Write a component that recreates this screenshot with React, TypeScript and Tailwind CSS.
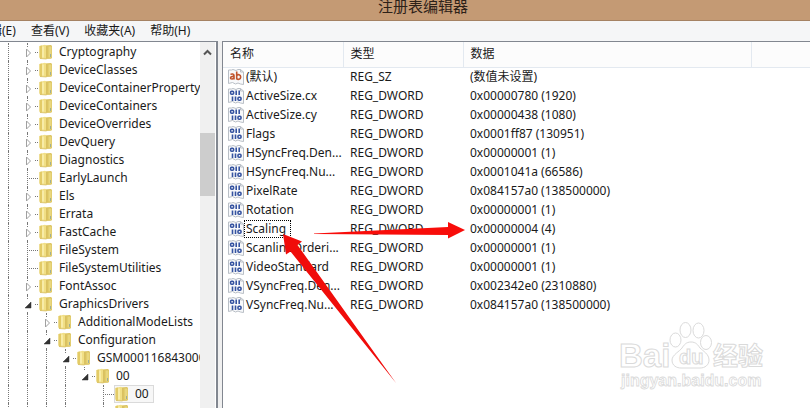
import { clsx } from 'clsx';

type TreeNode = {
  name: string;
  level: number;
  state: 'open' | 'closed' | 'leaf';
  last?: boolean;
  selected?: boolean;
};

const TREE: TreeNode[] = [
  { name: 'Cryptography', level: 1, state: 'closed' },
  { name: 'DeviceClasses', level: 1, state: 'closed' },
  { name: 'DeviceContainerPropertyUpdateEvents', level: 1, state: 'closed' },
  { name: 'DeviceContainers', level: 1, state: 'closed' },
  { name: 'DeviceOverrides', level: 1, state: 'closed' },
  { name: 'DevQuery', level: 1, state: 'closed' },
  { name: 'Diagnostics', level: 1, state: 'closed' },
  { name: 'EarlyLaunch', level: 1, state: 'leaf' },
  { name: 'Els', level: 1, state: 'closed' },
  { name: 'Errata', level: 1, state: 'closed' },
  { name: 'FastCache', level: 1, state: 'closed' },
  { name: 'FileSystem', level: 1, state: 'leaf' },
  { name: 'FileSystemUtilities', level: 1, state: 'leaf' },
  { name: 'FontAssoc', level: 1, state: 'closed' },
  { name: 'GraphicsDrivers', level: 1, state: 'open' },
  { name: 'AdditionalModeLists', level: 2, state: 'closed' },
  { name: 'Configuration', level: 2, state: 'open' },
  { name: 'GSM000116843000', level: 3, state: 'open' },
  { name: '00', level: 4, state: 'open', last: true },
  { name: '00', level: 5, state: 'leaf', selected: true },
  { name: '', level: 5, state: 'leaf' },
];

// the only key at this depth is the last one, so no guide runs on below it
const LAST_LEVEL = 4;

const VALUES = [
  { name: '(默认)', type: 'REG_SZ', data: '(数值未设置)' },
  { name: 'ActiveSize.cx', type: 'REG_DWORD', data: '0x00000780 (1920)' },
  { name: 'ActiveSize.cy', type: 'REG_DWORD', data: '0x00000438 (1080)' },
  { name: 'Flags', type: 'REG_DWORD', data: '0x0001ff87 (130951)' },
  { name: 'HSyncFreq.Den...', type: 'REG_DWORD', data: '0x00000001 (1)' },
  { name: 'HSyncFreq.Nu...', type: 'REG_DWORD', data: '0x0001041a (66586)' },
  { name: 'PixelRate', type: 'REG_DWORD', data: '0x084157a0 (138500000)' },
  { name: 'Rotation', type: 'REG_DWORD', data: '0x00000001 (1)' },
  { name: 'Scaling', type: 'REG_DWORD', data: '0x00000004 (4)', focused: true },
  { name: 'ScanlineOrderi...', type: 'REG_DWORD', data: '0x00000001 (1)' },
  { name: 'VideoStandard', type: 'REG_DWORD', data: '0x00000001 (1)' },
  { name: 'VSyncFreq.Den...', type: 'REG_DWORD', data: '0x002342e0 (2310880)' },
  { name: 'VSyncFreq.Nu...', type: 'REG_DWORD', data: '0x084157a0 (138500000)' },
];

const MENU = ['编辑(E)', '查看(V)', '收藏夹(A)', '帮助(H)'];

function FolderIcon() {
  return (
    <svg width="14" height="16" viewBox="0 0 14 16" className="shrink-0">
      <path d="M5.5 1.5 12 1l1 1v12l-1 .8-6.5.2z" fill="#dcc460" />
      <path d="M9.500 2.500H12.500V13.500H9.500z" fill="#e9d77e" />
      <path d="M.5 2 6 .8 7.500 2v13L1 14.500.5 13z" fill="#f1df85" />
      <path d="M.5 2 3 1.500v13L1 14.500.5 13z" fill="#e3cb67" />
      <path d="M4 2.500v11" stroke="#faf0b4" strokeWidth="1.500" />
      <path d="M7.500 2v12.500M1 14.500 7.500 15" stroke="#d3b95a" strokeWidth=".7" />
      <path d="M11.500 10v3" stroke="#8aa3a0" strokeWidth=".8" />
    </svg>
  );
}

function ValueIcon({ text }: { text: boolean }) {
  return (
    <svg width="16" height="16" viewBox="0 0 16 16" className="shrink-0">
      <path d="M.5 1h3l1.500-.5 3 1 2-1 2.500 0 3 2.500v12.500l-3-.5-2.500-1-2.500 1-3-1.500-4 1z" fill="#f8f9fb" stroke="#b9bfc6" />
      <path d="M12.500.5v2.500h3" fill="none" stroke="#b9bfc6" />
      {text ? (
        <g fill="none" stroke="#c0532c" strokeWidth="1.600">
          <path d="M2.500 5.500c1-.8 3.500-.8 3.500 1V10.500M6 7.500c-2-.3-3.500.2-3.500 1.500S5 10.500 6 9" />
          <path d="M8.700 2.500v8M8.700 6.500c1-1.500 4-1.200 4 1.500s-3 3-4 1.500" />
        </g>
      ) : (
        <g fill="none" stroke="#3553a0" strokeWidth="1.600">
          <rect x="2.600" y="3.300" width="3" height="3" rx="1" />
          <path d="M8.200 2.500V7M11.200 2.500V7" />
          <path d="M4.500 8.500V13M7.500 8.500V13" />
          <rect x="10" y="9.300" width="3" height="3" rx="1" />
        </g>
      )}
    </svg>
  );
}

function TreeRow({ node }: { node: TreeNode }) {
  return (
    <li className="flex h-[18px] items-center pl-2">
      {Array.from({ length: node.level }, (_, i) => (
        <span
          key={i}
          className={clsx('w-[19px] shrink-0 self-stretch border-l border-dotted', i === LAST_LEVEL ? 'border-transparent' : 'border-[#777]')}
        />
      ))}
      <span className="relative flex w-[11px] shrink-0 items-center self-stretch">
        <span className={clsx('absolute left-0 top-0 border-l border-dotted border-[#777]', node.last ? 'h-1/2' : 'h-full')} />
        <span className="w-full border-t border-dotted border-[#777]" />
        {node.state !== 'leaf' && (
          <button aria-label={node.name} className="absolute -left-1 top-1 h-3 w-3 bg-white">
            <svg width="12" height="12" viewBox="0 0 12 12">
              {node.state === 'closed' ? (
                <path d="M3.500 2v8L7.500 6z" fill="#fff" stroke="#a0a0a0" />
              ) : (
                <path d="M8 3v6H2z" fill="#333" stroke="#333" strokeWidth=".5" />
              )}
            </svg>
          </button>
        )}
      </span>
      <span
        className={clsx(
          'flex h-[18px] shrink-0 items-center gap-1.5 whitespace-nowrap border pr-1',
          node.selected ? 'border-[#dadada] bg-[#f7f7f7]' : 'border-transparent',
        )}
      >
        <FolderIcon />
        {node.name}
      </span>
    </li>
  );
}

function Arrows() {
  return (
    <svg width="200" height="180" viewBox="280 210 200 180" className="pointer-events-none absolute left-[57px] top-[168px]">
      <path d="M314 233.500 448 227v-5l17 8-17 8.500v-3.500l-134-1z" fill="#f80d0a" />
      <path d="M283 234l19 7.500-4.500 3.500L396 383 290.500 251.500l-4.500 3z" fill="#f00c0a" />
    </svg>
  );
}

function Watermark() {
  return (
    <svg width="160" height="84" viewBox="610 315 160 84" className="pointer-events-none absolute right-10 bottom-2">
      <g fill="#fff" stroke="#dadada" strokeWidth="1" fontFamily="'Liberation Sans', 'Noto Sans CJK SC', sans-serif" fontWeight="700">
        <text x="619" y="366" fontSize="33">Bai</text>
        <ellipse cx="675.500" cy="339" rx="5.500" ry="7" />
        <ellipse cx="685.500" cy="329" rx="5.500" ry="7.500" />
        <ellipse cx="698.500" cy="329.500" rx="5.500" ry="7.500" />
        <ellipse cx="706" cy="341.500" rx="5.500" ry="7" />
        <path d="M691 341c-5 0-7 3-9 6s-10 7-10 12c0 6 5 8 9 8h19c5 0 9-3 9-8 0-6-6-9-9-12-2-3-4-6-9-6z" />
        <text x="679" y="363" fontSize="20">du</text>
        <text x="713" y="364" fontSize="25">经验</text>
        <text x="621" y="385" fontSize="16" strokeWidth=".8">jingyan.baidu.com</text>
      </g>
    </svg>
  );
}

export default function App() {
  return (
    <div className="flex h-screen flex-col overflow-hidden bg-[#f0f0f0] font-['Noto_Sans','Noto_Sans_CJK_SC',sans-serif] text-xs text-[#1a1a1a]">
      <header className="flex h-[21px] shrink-0 items-end justify-center border-b border-[#a58263] bg-[#c49a74]">
        <h1 className="pb-1 pl-9 text-[15px] leading-5 text-[#2d2118]">注册表编辑器</h1>
      </header>
      <nav className="-ml-[22px] flex h-5 shrink-0 items-center gap-[15px] bg-[#f5f6f7]">
        {MENU.map((item) => (
          <button key={item} className="whitespace-nowrap">{item}</button>
        ))}
      </nav>
      <div className="flex min-h-0 flex-1 gap-1">
        <aside className="flex w-[218px] shrink-0 overflow-hidden border-t border-r-2 border-[#828790] bg-white pr-px">
          <ul className="min-w-0 flex-1 overflow-hidden pt-px">
            {TREE.map((node, i) => (
              <TreeRow key={i} node={node} />
            ))}
          </ul>
          <div className="flex w-[15px] shrink-0 flex-col bg-[#f0f0f0]">
            <button aria-label="Scroll up" className="flex h-5 items-center justify-center">
              <svg width="9" height="7" viewBox="0 0 9 7">
                <path d="M1 5.500 4.500 2 8 5.500" fill="none" stroke="#555" strokeWidth="2" />
              </svg>
            </button>
            <span className="flex-[71]" />
            <span className="h-[63px] bg-[#cdcdcd]" />
            <span className="flex-[212]" />
          </div>
        </aside>
        <main className="relative min-w-0 flex-1 overflow-hidden border-t border-l border-[#828790] bg-white">
          <table className="w-full table-fixed border-collapse text-left">
            <colgroup>
              <col className="w-[120px]" />
              <col className="w-[120px]" />
              <col className="w-[288px]" />
              <col />
            </colgroup>
            <thead>
              <tr className="h-[25px] border-b border-[#e3e9f0] bg-[#fcfcfc]">
                <th className="border-r border-[#e3e9f0] pl-[7px] font-normal">名称</th>
                <th className="border-r border-[#e3e9f0] pl-[7px] font-normal">类型</th>
                <th className="border-r border-[#e3e9f0] pl-[7px] font-normal">数据</th>
                <th />
              </tr>
            </thead>
            <tbody>
              {VALUES.map((v) => (
                <tr key={v.name} className="h-[19px]">
                  <td className="p-0 pl-[5px]">
                    <div className="flex h-[19px] items-center whitespace-nowrap">
                      <ValueIcon text={v.type === 'REG_SZ'} />
                      <span className={clsx('border border-dotted px-px leading-4', v.focused ? 'border-black pr-1' : 'border-transparent')}>
                        {v.name}
                      </span>
                    </div>
                  </td>
                  <td className="p-0 pl-[7px]">{v.type}</td>
                  <td className="p-0 pl-[7px]">{v.data}</td>
                  <td />
                </tr>
              ))}
            </tbody>
          </table>
          <Arrows />
          <Watermark />
        </main>
      </div>
    </div>
  );
}
